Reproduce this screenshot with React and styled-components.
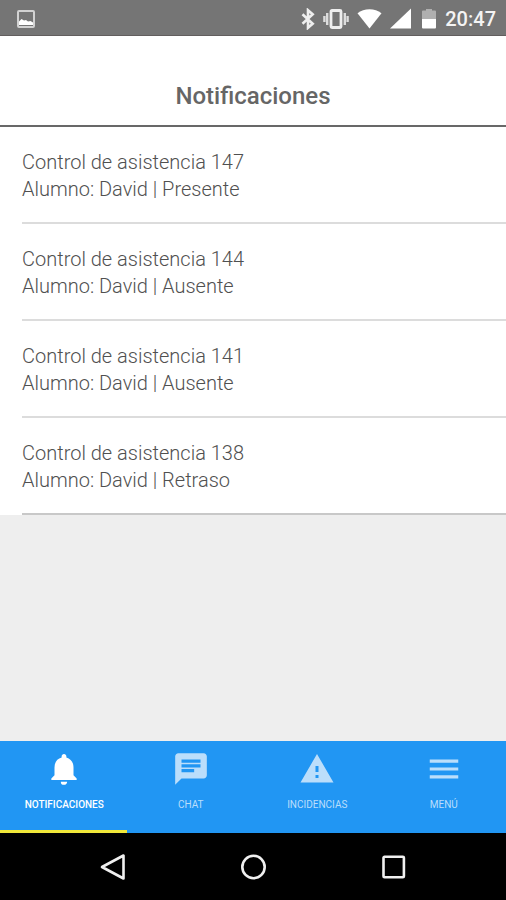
import React from 'react';
import styled, { createGlobalStyle, css } from 'styled-components';
import { MdNotifications, MdChat, MdWarning, MdMenu } from 'react-icons/md';

const blue = '#2196f3';
const yellow = '#f0e83a';
const grey = '#eeeeee';
const textColor = '#666';
const sidePadding = 22;

const notifications = [
  { id: 147, student: 'David', status: 'Presente' },
  { id: 144, student: 'David', status: 'Ausente' },
  { id: 141, student: 'David', status: 'Ausente' },
  { id: 138, student: 'David', status: 'Retraso' },
];

const tabs = [
  { label: 'Notificaciones', icon: MdNotifications, size: 38, active: true },
  { label: 'Chat', icon: MdChat, size: 38 },
  { label: 'Incidencias', icon: MdWarning, size: 36 },
  { label: 'Menú', icon: MdMenu, size: 38 },
];

const App = () => (
  <Screen>
    <GlobalStyle />
    <StatusBar />

    <Header>
      <Title>Notificaciones</Title>
    </Header>

    <Content>
      <List>
        {notifications.map(n => (
          <Item key={n.id}>
            <Line>Control de asistencia {n.id}</Line>
            <Line>Alumno: {n.student} | {n.status}</Line>
          </Item>
        ))}
      </List>
    </Content>

    <TabBar>
      {tabs.map(({ label, icon: Icon, size, active }) => (
        <Tab key={label} type="button" $active={active}>
          <TabIcon>
            <Icon size={size} />
          </TabIcon>
          <TabLabel $active={active}>{label}</TabLabel>
        </Tab>
      ))}
    </TabBar>

    <NavBar>
      <NavButton type="button" aria-label="Atrás">
        <svg width="28" height="28" viewBox="0 0 28 28">
          <path d="M24.5 2.5v23L3 14z" />
        </svg>
      </NavButton>
      <NavButton type="button" aria-label="Inicio">
        <svg width="28" height="28" viewBox="0 0 28 28">
          <circle cx="14.5" cy="14" r="11.2" />
        </svg>
      </NavButton>
      <NavButton type="button" aria-label="Recientes">
        <svg width="28" height="28" viewBox="0 0 28 28">
          <rect x="4.5" y="3.8" width="20.4" height="20.4" rx="1" />
        </svg>
      </NavButton>
    </NavBar>
  </Screen>
);

const StatusBar = () => (
  <Status>
    <svg width="18" height="18" viewBox="0 0 18 18">
      <rect x="1" y="1" width="16" height="16" rx="1" fill="none" stroke="#d2d2d2" strokeWidth="2" />
      <path d="M2 15v-3.5L4.5 9 7 10.5l2-.5 2 1.5 2.5-.5 2.500 1.500V15z" fill="#fff" />
    </svg>

    <StatusIcons>
      {/* bluetooth */}
      <svg width="14" height="22" viewBox="0 0 14 22">
        <path d="M1.5 6.2l10.2 9.6-4.7 4V2.2l4.7 4L1.500 15.800" fill="none" stroke="#eee" strokeWidth="2.6" />
      </svg>
      {/* vibrate */}
      <svg width="26" height="22" viewBox="0 0 26 22">
        <rect x="8" y="2.5" width="10" height="17" rx="1" fill="none" stroke="#eee" strokeWidth="2.8" />
        <path d="M4.2 5v12M21.8 5v12M1.4 8v6M24.6 8v6" fill="none" stroke="#ddd" strokeWidth="2.4" />
      </svg>
      {/* wifi */}
      <svg width="25" height="22" viewBox="0 0 25 22">
        <path d="M.5 5.2C3.9 2.600 8 1.200 12.500 1.200s8.600 1.400 12 4l-12 15.300z" fill="#fff" />
      </svg>
      {/* signal */}
      <svg width="21" height="22" viewBox="0 0 21 22">
        <path d="M21 .5v20H0z" fill="#fff" />
      </svg>
      {/* battery */}
      <svg width="18" height="22" viewBox="0 0 18 22">
        <path d="M3 11V3.5q0-1 1-1h3V1h6v1.5h3q1 0 1 1V11z" fill="#b0b0b0" />
        <path d="M3 11h14v8.500q0 1-1 1H4q-1 0-1-1z" fill="#fff" />
      </svg>
      <Clock>20:47</Clock>
    </StatusIcons>
  </Status>
);

export default App;

const GlobalStyle = createGlobalStyle`
  *, *::before, *::after {
    box-sizing: border-box;
  }

  body {
    margin: 0;
    font-family: Roboto, sans-serif;
    color: ${textColor};
    background: ${grey};
  }
`;

const Screen = styled.div`
  display: flex;
  flex-direction: column;
  min-height: 100vh;
`;

const Status = styled.div`
  display: flex;
  align-items: center;
  justify-content: space-between;
  height: 36px;
  padding: 3px 10px 0 17px;
  background: #757575;
  border-bottom: 1px solid #625e5e;
`;

const StatusIcons = styled.div`
  display: flex;
  align-items: center;
  gap: 8px;
`;

const Clock = styled.time`
  font-size: 20px;
  font-weight: 500;
  line-height: 24px;
  color: #f4f4f4;
`;

const Header = styled.header`
  padding: 47px 16px 15px;
  text-align: center;
  background: #fff;
  border-bottom: 2px solid #686868;
`;

const Title = styled.h1`
  margin: 0;
  font-size: 24px;
  font-weight: 500;
  line-height: 27px;
`;

const Content = styled.main`
  flex: 1;
`;

const List = styled.ul`
  margin: 0;
  padding: 0 0 0 ${sidePadding}px;
  list-style: none;
  background: #fff;
`;

const Item = styled.li`
  padding: 22px 0 19px;
  border-bottom: 2px solid #dcdcdc;

  &:last-child {
    border-bottom-color: #c8c8c8;
  }
`;

const Line = styled.div`
  font-size: 20px;
  font-weight: 300;
  line-height: 27px;
  color: #505050;
`;

const TabBar = styled.nav`
  display: flex;
  height: 92px;
  background: ${blue};
`;

const Tab = styled.button`
  display: flex;
  flex: 1 1 0;
  flex-direction: column;
  align-items: center;
  gap: 11px;
  min-width: 0;
  padding: 9px 0 0 2px;
  font-family: inherit;
  color: #bbdefb;
  background: none;
  border: 0;
  border-bottom: 3px solid transparent;
  cursor: pointer;

  ${p => p.$active && css`
    color: #fff;
    border-bottom-color: ${yellow};
  `}
`;

const TabIcon = styled.span`
  display: flex;
  align-items: center;
  height: 38px;
`;

const TabLabel = styled.span`
  font-size: 10px;
  font-weight: ${p => (p.$active ? 500 : 400)};
  line-height: 12px;
  text-transform: uppercase;
`;

const NavBar = styled.nav`
  display: flex;
  justify-content: center;
  gap: 112px;
  height: 67px;
  background: #000;
`;

const NavButton = styled.button`
  display: flex;
  align-items: center;
  padding: 0;
  background: none;
  border: 0;
  cursor: pointer;

  svg {
    fill: none;
    stroke: #f0f0f0;
    stroke-width: 2.6;
    stroke-linejoin: round;
  }
`;
